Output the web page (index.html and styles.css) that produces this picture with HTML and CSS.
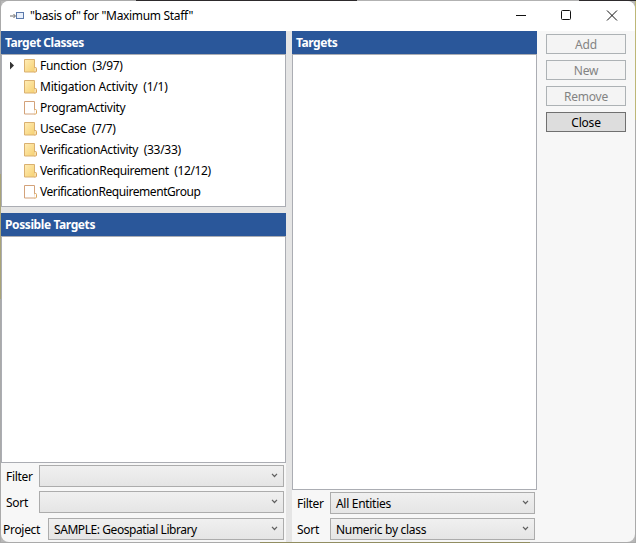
FILE: index.html
```html
<!DOCTYPE html>
<html lang="en">
<head>
<meta charset="utf-8">
<title>"basis of" for "Maximum Staff"</title>
<link rel="stylesheet" href="styles.css">
</head>
<body>
<svg width="0" height="0" class="defs">
  <defs>
    <linearGradient id="gold" x1="0" y1="0" x2="1" y2="1"><stop offset="0" stop-color="#ffedb8"/><stop offset="1" stop-color="#f6d070"/></linearGradient>
    <symbol id="full" viewBox="0 0 14 14"><path d="M.5.5h10v12.500H.5z" fill="url(#gold)" stroke="#d9b070"/><path d="M10.500 8.500h1q1 0 1 1v2.500q0 1-1 1h-1.500" fill="#fbe3a8" stroke="#d9a45c"/></symbol>
    <symbol id="empty" viewBox="0 0 14 14"><path d="M.5.5h10v12.500H.5z" fill="#fff" stroke="#d3a27a"/><path d="M10.500 8.500h1q1 0 1 1v2.500q0 1-1 1h-1.500" fill="#fff" stroke="#d9a45c"/></symbol>
    <symbol id="chev" viewBox="0 0 7 5"><path d="M1 .8l2.500 2.700L6 .8" fill="none" stroke="#606060" stroke-width="1.200"/></symbol>
  </defs>
</svg>
<div class="window">
  <header class="titlebar">
    <svg class="app" width="15" height="8" viewBox="0 0 15 8"><path d="M0 4h5M3.500 2L5.500 4 3.500 6" fill="none" stroke="#666"/><rect x="6.500" y=".5" width="7" height="6" fill="#e9f0fb" stroke="#5b79ab"/></svg>
    <span class="caption">"basis of" for "Maximum Staff"</span>
    <svg class="controls" width="104" height="12" viewBox="0 0 104 12"><g fill="none" stroke="#111"><path d="M0 5.500h10"/><rect x="45.500" y=".5" width="9" height="9" rx="1"/><path d="M91 .5l10 10M101 .5L91 10.500"/></g></svg>
  </header>
  <main class="body">
    <section class="left">
      <h2>Target Classes</h2>
      <ul class="list classes">
        <li class="parent"><svg class="icon"><use href="#full"/></svg><span>Function&nbsp; (3/97)</span></li>
        <li><svg class="icon"><use href="#full"/></svg><span class="wide">Mitigation Activity&nbsp; (1/1)</span></li>
        <li><svg class="icon"><use href="#empty"/></svg><span>ProgramActivity</span></li>
        <li><svg class="icon"><use href="#full"/></svg><span>UseCase&nbsp; (7/7)</span></li>
        <li><svg class="icon"><use href="#full"/></svg><span>VerificationActivity&nbsp; (33/33)</span></li>
        <li><svg class="icon"><use href="#full"/></svg><span class="snug">VerificationRequirement&nbsp; (12/12)</span></li>
        <li><svg class="icon"><use href="#empty"/></svg><span class="tight">VerificationRequirementGroup</span></li>
      </ul>
      <div class="hsplit"></div>
      <h2 class="roomy">Possible Targets</h2>
      <div class="list possible"></div>
      <div class="form">
        <div class="field"><label>Filter</label><div class="combo"><svg class="chev"><use href="#chev"/></svg></div></div>
        <div class="field"><label>Sort</label><div class="combo"><svg class="chev"><use href="#chev"/></svg></div></div>
        <div class="field project"><label>Project</label><div class="combo"><span class="tight">SAMPLE: Geospatial Library</span><svg class="chev"><use href="#chev"/></svg></div></div>
      </div>
    </section>
    <div class="vsplit"></div>
    <section class="right">
      <h2>Targets</h2>
      <div class="list targets"></div>
      <div class="form">
        <div class="field"><label>Filter</label><div class="combo"><span>All Entities</span><svg class="chev"><use href="#chev"/></svg></div></div>
        <div class="field"><label>Sort</label><div class="combo"><span>Numeric by class</span><svg class="chev"><use href="#chev"/></svg></div></div>
      </div>
    </section>
    <aside class="actions">
      <button disabled>Add</button>
      <button disabled>New</button>
      <button disabled>Remove</button>
      <button>Close</button>
    </aside>
  </main>
</div>
</body>
</html>
```
FILE: styles.css
```css
* { box-sizing: border-box; }
body {
  margin: 0; width: 636px; height: 543px; padding: 1px; overflow: hidden;
  font: 12px/16px "Noto Sans", "Open Sans", sans-serif; letter-spacing: -.3px; color: #000;
  background:
    linear-gradient(90deg, #aaa 136px, #2d2a2c 136px 357px, #b2b2b2 357px 579px, #2d2a2c 579px) 0 0 / 636px 1px no-repeat,
    linear-gradient(#aaa 174px, #aaa477 174px 299px, #aaa 299px) 0 0 / 1px 543px no-repeat,
    linear-gradient(90deg, #aaa 260px, #918d61 260px 530px, #aaa 530px) 0 542px / 636px 1px no-repeat,
    linear-gradient(#bdb777 120px, #aaa 120px) 635px 0 / 1px 543px no-repeat, #b8b8b8;
}
.defs { position: absolute; }
.window { width: 634px; height: 541px; border-radius: 8px; overflow: hidden; background: #f7f7f7; }
.titlebar { height: 30px; display: flex; align-items: center; background: #fff; padding-left: 9px; }
.caption { margin-left: 5px; letter-spacing: -.32px; }
.controls { margin-left: auto; margin-right: 15px; }
.body { display: flex; height: 511px; }
.left { width: 285px; }
.right { width: 245px; }
.vsplit { width: 6px; background: #e5e5e5; }
.hsplit { height: 6px; background: #e5e5e5; }
h2 { margin: 0; height: 23px; padding-left: 4px; font-size: 12px; line-height: 23px; font-weight: 700; color: #fff; background: #2a579a; letter-spacing: -.45px; }
.roomy { letter-spacing: -.4px; }
.list { margin: 0; padding: 0; border: 1px solid #abadb3; background: #fff; list-style: none; }
.classes { height: 153px; }
.possible { height: 227px; }
.targets { height: 436px; }
li { display: flex; align-items: center; height: 21px; padding-left: 22px; white-space: nowrap; }
.parent { padding-left: 8px; }
.parent::before { content: ""; width: 14px; height: 8px; background: #333; clip-path: polygon(0 0, 4px 4px, 0 8px); }
.icon { width: 14px; height: 14px; margin-right: 2px; flex: none; }
.wide { letter-spacing: -.2px; }
.snug { letter-spacing: -.36px; }
.tight { letter-spacing: -.43px; }
.form { padding-top: 2px; }
.field { display: flex; align-items: center; height: 22px; margin-bottom: 4px; padding: 0 2px 0 5px; }
.project { margin-top: 5px; padding-left: 2px; }
label { width: 33px; flex: none; padding-top: 2px; }
.project label { width: 45px; }
.combo { flex: 1; height: 22px; display: flex; align-items: center; padding: 0 5px; border: 1px solid #acacac; background: linear-gradient(#f0f0f0, #e5e5e5); }
.combo span { padding-top: 2px; }
.chev { width: 7px; height: 5px; margin: 0 0 1px auto; }
.actions { padding: 3px 0 0 9px; display: flex; flex-direction: column; gap: 6px; }
button { width: 80px; height: 20px; padding: 2px 0 0; border: 1px solid #707070; background: #ddd; color: #000; font: inherit; line-height: 16px; letter-spacing: -.2px; }
button:disabled { border-color: #adb2b5; background: #f4f4f4; color: #838383; }
```
